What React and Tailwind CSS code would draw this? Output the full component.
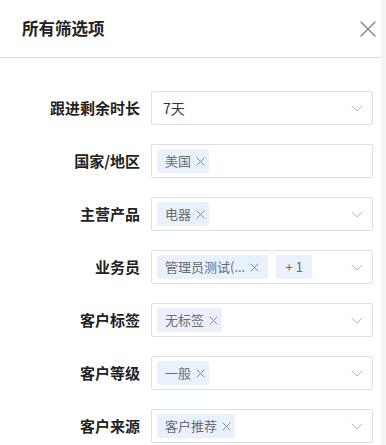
import React from "react";

const font = { fontFamily: '"Noto Sans CJK SC", "Noto Sans", sans-serif' };

function XIcon({ size = 9, color = "#8a8a8a", sw = 1.1 }) {
  return (
    <svg width={size} height={size} viewBox="0 0 10 10" fill="none">
      <path d="M1 1L9 9M9 1L1 9" stroke={color} strokeWidth={sw} strokeLinecap="round" />
    </svg>
  );
}

function Chevron() {
  return (
    <svg width="12" height="7" viewBox="0 0 12 7" fill="none">
      <path d="M1 1L6 6L11 1" stroke="#b8b8b8" strokeWidth="1" strokeLinecap="round" strokeLinejoin="round" />
    </svg>
  );
}

function Tag({ children, wide = false }) {
  return (
    <div
      className={
        "flex items-center h-[24px] rounded-[3px] bg-[#e9f1fc] pl-2 gap-[5px] text-[13px] text-[#6b6b6b] whitespace-nowrap " +
        (wide ? "pr-[9px]" : "pr-[4px]")
      }
    >
      <span>{children}</span>
      <XIcon />
    </div>
  );
}

function Row({ label, children, arrow = true }) {
  return (
    <div className="flex items-center">
      <div className="w-[140px] text-right text-[15px] font-bold text-[#222]">{label}</div>
      <div className="ml-[11px] w-[222px] h-[34px] border border-[#dcdfe6] rounded-[2px] flex items-center pl-[5px] pr-[9px]">
        <div className="flex-1 flex items-center gap-2">{children}</div>
        {arrow && <Chevron />}
      </div>
    </div>
  );
}

export default function App() {
  return (
    <div className="w-[386px] h-[445px] overflow-hidden bg-white flex" style={font}>
      <div className="flex-1 flex flex-col">
        <div className="h-[58px] border-b border-[#dedede] flex items-center justify-between pl-[22px] pr-[5px]">
          <div className="text-[16.5px] font-bold text-[#222]">所有筛选项</div>
          <svg width="16" height="16" viewBox="0 0 16 16" fill="none">
            <path d="M1 1L15 15M15 1L1 15" stroke="#8a8a8a" strokeWidth="1.5" strokeLinecap="round" />
          </svg>
        </div>
        <div className="pt-[33px] flex flex-col gap-[19px]">
          <Row label="跟进剩余时长">
            <span className="pl-[6px] text-[14px] text-[#333]">7天</span>
          </Row>
          <Row label="国家/地区" arrow={false}>
            <Tag>美国</Tag>
          </Row>
          <Row label="主营产品">
            <Tag>电器</Tag>
          </Row>
          <Row label="业务员">
            <Tag wide>管理员测试(...</Tag>
            <div className="flex items-center justify-center h-[24px] w-[36px] rounded-[3px] bg-[#e9f1fc] text-[13px] text-[#6b6b6b]">+ 1</div>
          </Row>
          <Row label="客户标签">
            <Tag>无标签</Tag>
          </Row>
          <Row label="客户等级">
            <Tag>一般</Tag>
          </Row>
          <Row label="客户来源">
            <Tag>客户推荐</Tag>
          </Row>
        </div>
      </div>
      <div className="w-[5px] h-full bg-[#f4f4f4]" />
    </div>
  );
}
